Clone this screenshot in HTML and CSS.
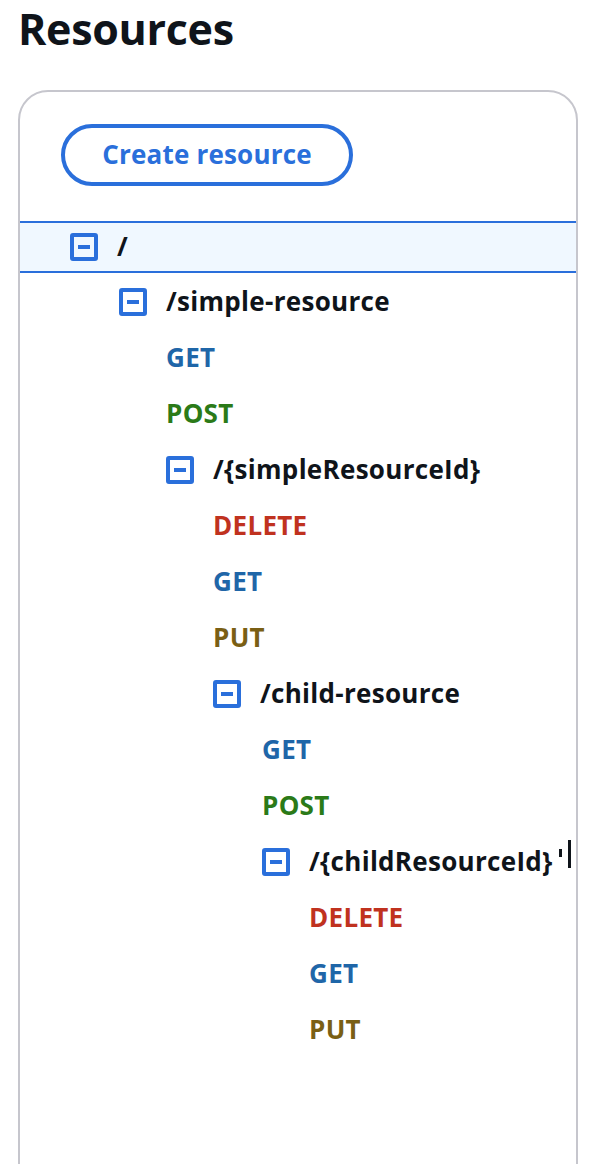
FILE: index.html
```html
<!DOCTYPE html>
<html lang="en">
<head>
<meta charset="utf-8">
<title>Resources</title>
<link rel="stylesheet" href="styles.css">
</head>
<body>
<h1 class="title">Resources</h1>
<section class="card">
  <div class="actions">
    <button class="btn" type="button">Create resource</button>
  </div>
  <ul class="tree root">
    <li>
      <div class="row selected"><span class="toggle"><span class="bar"></span></span><span class="path">/</span></div>
      <ul class="tree l1">
        <li>
          <div class="row"><span class="toggle"><span class="bar"></span></span><span class="path">/simple-resource</span></div>
          <ul class="tree l2">
            <li class="row method get">GET</li>
            <li class="row method post">POST</li>
            <li>
              <div class="row"><span class="toggle"><span class="bar"></span></span><span class="path">/{simpleResourceId}</span></div>
              <ul class="tree l3">
                <li class="row method delete">DELETE</li>
                <li class="row method get">GET</li>
                <li class="row method put">PUT</li>
                <li>
                  <div class="row"><span class="toggle"><span class="bar"></span></span><span class="path">/child-resource</span></div>
                  <ul class="tree l4">
                    <li class="row method get">GET</li>
                    <li class="row method post">POST</li>
                    <li>
                      <div class="row"><span class="toggle"><span class="bar"></span></span><span class="path">/{childResourceId}</span><span class="caret"><span class="tick"></span><span class="line"></span></span></div>
                      <ul class="tree l5">
                        <li class="row method delete">DELETE</li>
                        <li class="row method get">GET</li>
                        <li class="row method put">PUT</li>
                      </ul>
                    </li>
                  </ul>
                </li>
              </ul>
            </li>
          </ul>
        </li>
      </ul>
    </li>
  </ul>
</section>
</body>
</html>
```

FILE: styles.css
```css
html, body {
  margin: 0;
  padding: 0;
  background: #ffffff;
}
body {
  font-family: "Open Sans", "Noto Sans", sans-serif;
  color: #0f141a;
  overflow: hidden;
  height: 1164px;
}
.title {
  margin: 0;
  padding: 0 0 0 18px;
  font-size: 43px;
  font-weight: 700;
  line-height: 58px;
  letter-spacing: -0.3px;
  color: #0f141a;
}
.card {
  margin: 32px 23px 0 18px;
  border: 2px solid #c6c6cd;
  border-radius: 30px;
  height: 1200px;
  box-sizing: border-box;
}
.actions {
  padding: 32px 0 0 41px;
  height: 126px;
  box-sizing: border-box;
}
.btn {
  display: flex;
  align-items: center;
  justify-content: center;
  width: 292px;
  height: 62px;
  border: 4px solid #2a6fdb;
  border-radius: 31px;
  background: #ffffff;
  color: #2a6fdb;
  font-family: "Open Sans", "Noto Sans", sans-serif;
  font-size: 26px;
  font-weight: 700;
  letter-spacing: 0.2px;
  padding: 0 0 2px 0;
  box-sizing: border-box;
}
.tree {
  list-style: none;
  margin: 0;
  padding: 0;
}
.l1 { margin-left: 99px; }
.l2 { margin-left: 47px; }
.l3 { margin-left: 47px; }
.l4 { margin-left: 49px; }
.l5 { margin-left: 47px; }
.row {
  display: flex;
  align-items: center;
  height: 56px;
  font-size: 26px;
  font-weight: 700;
  letter-spacing: 0.3px;
  box-sizing: border-box;
}
.root > li > .row {
  padding-left: 50px;
}
.row.selected {
  height: 52px;
  margin: 3px 0 1px 0;
  background: #f0f8ff;
  border-top: 2px solid #2a6fdb;
  border-bottom: 2px solid #2a6fdb;
}
.toggle {
  display: flex;
  align-items: center;
  justify-content: center;
  width: 28px;
  height: 28px;
  border: 4px solid #2a6fdb;
  border-radius: 3px;
  box-sizing: border-box;
  margin-right: 19px;
  flex: none;
}
.bar {
  display: block;
  width: 12px;
  height: 4px;
  background: #2a6fdb;
}
.path {
  color: #0f141a;
  padding-bottom: 2px;
}
.method {
  padding-bottom: 2px;
}
.get { color: #1f66a8; }
.post { color: #2b7a18; }
.delete { color: #c0321f; }
.put { color: #7a5f14; }
.caret {
  display: flex;
  align-items: flex-start;
  height: 30px;
  margin-left: 6px;
  margin-top: -14px;
}
.tick {
  display: block;
  width: 3px;
  height: 8px;
  margin-top: 9px;
  background: #0f141a;
}
.line {
  display: block;
  width: 3px;
  height: 28px;
  margin-left: 6px;
  background: #0f141a;
}
```
